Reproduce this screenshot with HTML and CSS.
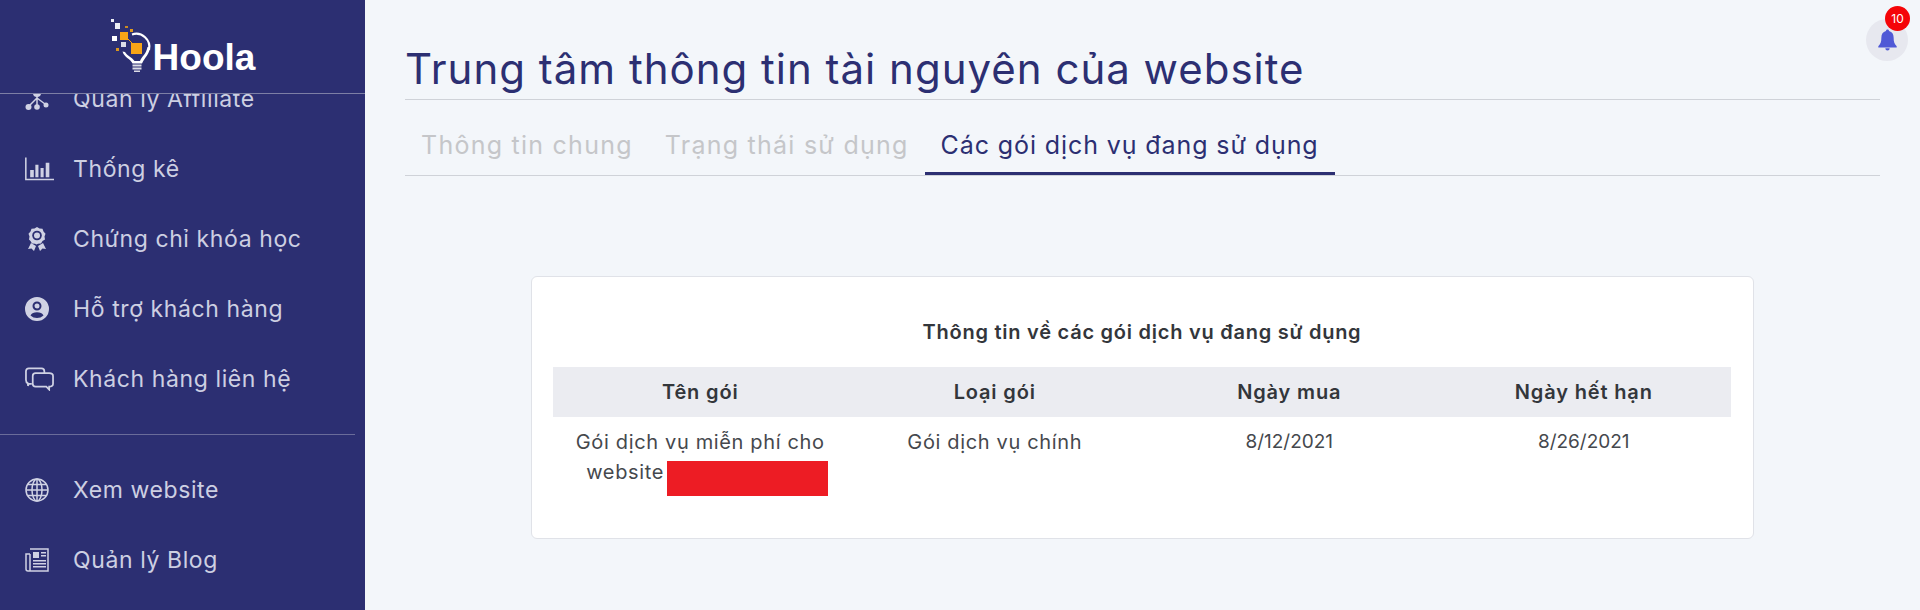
FILE: index.html
```html
<!DOCTYPE html>
<html lang="vi">
<head>
<meta charset="utf-8">
<title>Trung tâm thông tin tài nguyên của website</title>
<link rel="stylesheet" href="styles.css">
</head>
<body>
<div class="app">
  <aside class="sidebar">
    <div class="brand">
      <svg class="brand-mark" viewBox="0 0 42 56" width="42" height="56" aria-hidden="true">
        <path d="M22 16.500A13.200 13.200 0 0 1 39 32" fill="none" stroke="#fff" stroke-width="2.200"/>
        <path d="M39.800 29c.2 7-5 10-7.800 16.500H22.500C20 40 14.500 40 12.500 33.500l2.500.5c2 4 7 5 9.500 9h5.500c2-5 6-6.500 7.500-14z" fill="#fff"/>
        <path d="M22.500 46.500h9v2h-9zM22.500 49.500h9v2h-9zM24 52.500h6v1.500h-6z" fill="#dcdce6"/>
        <rect x="21" y="25" width="11" height="11" fill="#f7a416"/>
        <rect x="10" y="14" width="8" height="8" fill="#f7a416"/>
        <path d="M17 20l7 7" stroke="#f7a416" stroke-width="1"/>
        <rect x="1" y="1" width="3" height="3" fill="#eceef5"/>
        <rect x="5" y="5" width="5" height="6" fill="#eceef5"/>
        <rect x="2" y="18" width="5" height="5" fill="#fff"/>
        <rect x="11" y="24" width="5" height="5" fill="#dcdee8"/>
        <rect x="15" y="8" width="3" height="2" fill="#c98a22"/>
        <rect x="20" y="11" width="3" height="3" fill="#e09a1d"/>
        <rect x="6" y="30" width="3" height="3" fill="#d8951f"/>
      </svg>
      <span class="brand-name">Hoola</span>
    </div>
    <nav class="nav">
      <a class="nav-item"><svg class="nav-icon" viewBox="0 0 24 24"><circle cx="12" cy="6" r="4"/><circle cx="3.500" cy="20" r="3"/><circle cx="21" cy="18" r="2.500"/><circle cx="12" cy="20" r="2.800"/><path d="M12 8v10M12 11l-8 8M12 11l8 6" class="nav-line"/></svg><span>Quản lý Affiliate</span></a>
      <a class="nav-item"><svg class="nav-icon nav-icon-wide" viewBox="0 0 28 22"><path d="M.8 0v21.200H28" class="nav-line"/><path d="M5 12h3.500v7H5zM10 7h3v12h-3zM15 10h3v9h-3zM20 5h3.500v14H20z"/></svg><span>Thống kê</span></a>
      <a class="nav-item"><svg class="nav-icon" viewBox="0 0 24 24"><path d="M12 0l2.500 1.500 3 .2 1 2.800 2 2.200-1 2.800.5 3-2.500 1.500-1.500 2.500-3 .2-1.500.8-1.500-.8-3-.2-1.500-2.500L4 12.500l.5-3-1-2.800 2-2.200 1-2.800 3-.2z"/><circle cx="12" cy="8.500" r="4.800" class="nav-hole"/><circle cx="12" cy="8.500" r="3"/><path d="M6 16l-3 6 3.500-.5L9 24l2-5zM18 16l3 6-3.500-.5L15 24l-2-5z"/></svg><span>Chứng chỉ khóa học</span></a>
      <a class="nav-item"><svg class="nav-icon" viewBox="0 0 24 24"><path fill-rule="evenodd" d="M12 0a12 12 0 1 1 0 24 12 12 0 0 1 0-24zm0 4.500a4.500 4.500 0 1 0 0 9 4.500 4.500 0 0 0 0-9zm0 2a2.500 2.500 0 1 1 0 5 2.500 2.500 0 0 1 0-5zm0 8.800c-3 0-5.500 1.200-6.500 3.200a9.500 9.500 0 0 0 13 0c-1-2-3.500-3.200-6.500-3.200z"/></svg><span>Hỗ trợ khách hàng</span></a>
      <a class="nav-item"><svg class="nav-icon nav-icon-wide" viewBox="0 0 30 24"><path d="M7 17H4l-1 2v-2.500C2 16 1 15 1 13V4c0-2 1-3 3-3h13c2 0 3 1 3 3v2" class="nav-line nav-line-bold"/><path d="M11 6h14c2 0 4 1 4 3v8c0 2-2 3-4 3v3l-3-3H11c-2 0-3-1-3-3V9c0-2 1-3 3-3z" class="nav-line nav-line-bold"/></svg><span>Khách hàng liên hệ</span></a>
      <hr class="nav-divider">
      <a class="nav-item"><svg class="nav-icon" viewBox="0 0 24 24"><g class="nav-line"><circle cx="12" cy="12" r="11"/><ellipse cx="12" cy="12" rx="5" ry="11"/><path d="M12 1v22M1 12h22M3 6.500h18M3 17.500h18"/></g></svg><span>Xem website</span></a>
      <a class="nav-item"><svg class="nav-icon" viewBox="0 0 24 24"><path d="M5 1h18v22H3c-1.500 0-2-1-2-2V6h4M5 6v17" class="nav-line"/><path d="M8 4h6v6H8zM16 4h5v1.500h-5zM16 7h5v1.500h-5zM8 12h13v1.500H8zM8 15h13v1.500H8zM8 18h13v1.500H8z"/></svg><span>Quản lý Blog</span></a>
    </nav>
  </aside>
  <main class="main">
    <div class="bell">
      <svg viewBox="0 0 24 24" width="21" height="22"><path fill="#5059d6" d="M12 0c1 0 1.800.8 1.800 1.800 3.500 1 5.200 3.700 5.200 7.200 0 5 1 7.500 3.500 10v1.500h-21V19C4 16.500 5 14 5 9c0-3.500 1.700-6.200 5.200-7.200C10.200.8 11 0 12 0zM9.500 21.500h5a2.500 2.500 0 0 1-5 0z"/></svg>
      <span class="badge">10</span>
    </div>
    <h1 class="page-title">Trung tâm thông tin tài nguyên của website</h1>
    <div class="tabs">
      <a class="tab">Thông tin chung</a>
      <a class="tab">Trạng thái sử dụng</a>
      <a class="tab tab-active">Các gói dịch vụ đang sử dụng</a>
    </div>
    <section class="card">
      <h2 class="card-title">Thông tin về các gói dịch vụ đang sử dụng</h2>
      <table class="plans">
        <thead>
          <tr><th>Tên gói</th><th>Loại gói</th><th>Ngày mua</th><th>Ngày hết hạn</th></tr>
        </thead>
        <tbody>
          <tr>
            <td>Gói dịch vụ miễn phí cho website <span class="redact"></span></td>
            <td>Gói dịch vụ chính</td>
            <td class="date">8/12/2021</td>
            <td class="date">8/26/2021</td>
          </tr>
        </tbody>
      </table>
    </section>
  </main>
</div>
</body>
</html>
```
FILE: styles.css
```css
* { box-sizing: border-box; }
html, body { margin: 0; height: 100%; }
body { font-family: "Inter", "Noto Sans", sans-serif; background: #f3f6fa; overflow: hidden; }
.app { display: flex; height: 610px; }
.sidebar { width: 365px; flex: none; height: 610px; background: #2c2f72; overflow: hidden; display: flex; flex-direction: column; }
.brand { height: 94px; flex: none; position: relative; z-index: 2; background: #2c2f72; border-bottom: 1px solid #7d7fa5; display: flex; align-items: flex-end; justify-content: center; padding: 0 0 20px 0; }
.brand-mark { margin-right: 1px; margin-bottom: -1px; }
.brand-name { font-family: "Liberation Sans", Arial, sans-serif; font-weight: 700; font-size: 37px; line-height: 30px; color: #fff; }
.nav { margin-top: -30px; display: flex; flex-direction: column; }
.nav-item { height: 70px; display: flex; align-items: center; gap: 24px; padding-left: 25px; color: #cdcfe2; font-size: 23px; letter-spacing: .6px; }
.nav-icon { width: 24px; height: 24px; fill: #d0d2e4; flex: none; }
.nav-icon-wide { width: 29px; margin-right: -5px; }
.nav-hole { fill: #2c2f72; }
.nav-line { fill: none; stroke: #d0d2e4; stroke-width: 1.500; }
.nav-line-bold { stroke-width: 1.800; }
.nav-divider { width: 355px; margin: 20px 0; border: 0; border-top: 1px solid #6a6c9a; }
.main { flex: 1; min-width: 0; position: relative; padding: 0 40px; }
.bell { position: absolute; top: 19px; right: 12px; width: 42px; height: 42px; border-radius: 50%; background: #e7e8ef; display: flex; align-items: center; justify-content: center; }
.badge { position: absolute; top: -13px; right: -2px; width: 25px; height: 25px; border-radius: 50%; background: #f50508; color: #fff; font-size: 12px; display: flex; align-items: center; justify-content: center; }
.page-title { margin: 0; height: 100px; padding-top: 42px; font-size: 42px; line-height: 54px; font-weight: 400; color: #2c2f72; letter-spacing: 1px; border-bottom: 1px solid #cfd2d8; white-space: nowrap; }
.tabs { display: flex; height: 76px; border-bottom: 1px solid #cfd2d8; padding-top: 16px; }
.tab { padding: 0 16px; height: 59px; line-height: 58px; font-size: 25px; color: #c5c6c9; letter-spacing: 1.250px; white-space: nowrap; }
.tab-active { color: #2c2f72; border-bottom: 3px solid #2c2f72; letter-spacing: .9px; }
.card { width: 1223px; height: 263px; margin: 100px 0 0 126px; background: #fff; border: 1px solid #e0e2e8; border-radius: 6px; padding: 0 22px 0 21px; }
.card-title { margin: 0; height: 90px; padding-top: 42px; line-height: 26px; text-align: center; font-size: 20px; font-weight: 600; color: #33363b; letter-spacing: .75px; }
.plans { width: 100%; border-collapse: collapse; table-layout: fixed; font-size: 20px; color: #45484d; }
.plans th { height: 50px; background: #ebecf1; font-weight: 600; color: #33363b; padding: 0 16px; letter-spacing: .85px; }
.plans td { padding: 10px 16px 0; text-align: center; vertical-align: top; line-height: 30px; letter-spacing: .65px; }
.plans .date { font-size: 19px; letter-spacing: 0; }
.redact { display: inline-block; width: 161px; height: 35px; margin: 4px -14px 0 -3px; background: #ed1c24; vertical-align: top; }
```
